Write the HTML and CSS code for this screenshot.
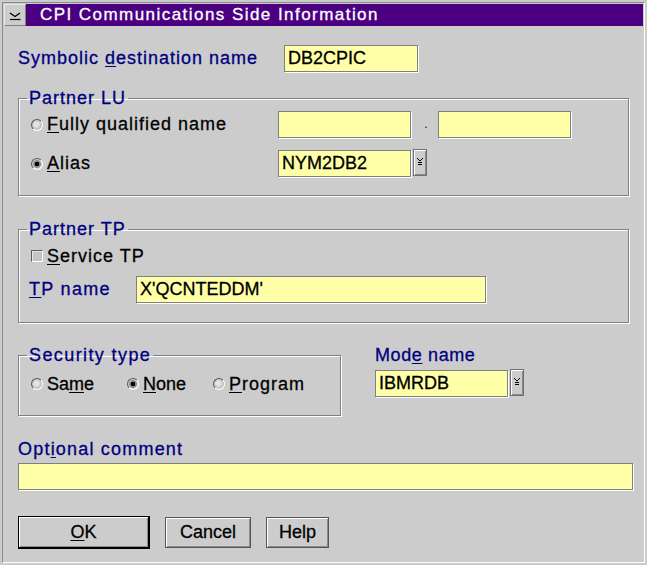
FILE: index.html
```html
<!DOCTYPE html>
<html>
<head>
<meta charset="utf-8">
<link rel="stylesheet" href="styles.css">
</head>
<body>
<div class="window">
  <div class="frame">
    <div class="titlebar">
      <div class="sysmenu">
        <svg width="20" height="20" viewBox="0 0 20 20"><polyline points="5,8 10,11.5 15,8" fill="none" stroke="#000" stroke-width="1.4"/><line x1="5" y1="14.5" x2="15.5" y2="14.5" stroke="#000" stroke-width="1.2"/></svg>
      </div>
      <div class="title">CPI Communications Side Information</div>
    </div>
    <div class="content">
      <div class="row dest">
        <span class="lbl lbl-dest">Symbolic <u>d</u>estination name</span>
        <div class="field w134">DB2CPIC</div>
      </div>

      <fieldset class="group lu">
        <legend>Partner LU</legend>
        <div class="row">
          <span class="opt optwide sp1"><span class="radio"></span><span><u>F</u>ully qualified name</span></span>
          <div class="field w133"></div>
          <span class="sep">.</span>
          <div class="field w133"></div>
        </div>
        <div class="row alias">
          <span class="opt optwide sp1"><span class="radio on"></span><span><u>A</u>lias</span></span>
          <div class="field w133">NYM2DB2</div>
          <div class="drop"><svg width="6" height="9" viewBox="0 0 6 9"><path d="M0 0h1v1H0zM5 0h1v1H5zM1 1h1v1H1zM4 1h1v1H4zM2 2h2v1H2zM1 4h4v1H1zM1 6h4v1H1z" fill="#000"/></svg></div>
        </div>
      </fieldset>

      <fieldset class="group tp">
        <legend>Partner TP</legend>
        <div class="row svc">
          <span class="opt sp1"><span class="check"></span><span><u>S</u>ervice TP</span></span>
        </div>
        <div class="row tpname">
          <span class="lbl lbl-tp"><u>T</u>P name</span>
          <div class="field w350">X'QCNTEDDM'</div>
        </div>
      </fieldset>

      <div class="secrow">
        <fieldset class="group sec">
          <legend>Security type</legend>
          <div class="row radios">
            <span class="opt o-same"><span class="radio"></span><span>Sa<u>m</u>e</span></span>
            <span class="opt o-none"><span class="radio on"></span><span><u>N</u>one</span></span>
            <span class="opt sp1"><span class="radio"></span><span><u>P</u>rogram</span></span>
          </div>
        </fieldset>
        <div class="mode">
          <span class="lbl lbl-mode">Mod<u>e</u> name</span>
          <div class="row modefield">
            <div class="field w133">IBMRDB</div>
            <div class="drop"><svg width="6" height="9" viewBox="0 0 6 9"><path d="M0 0h1v1H0zM5 0h1v1H5zM1 1h1v1H1zM4 1h1v1H4zM2 2h2v1H2zM1 4h4v1H1zM1 6h4v1H1z" fill="#000"/></svg></div>
          </div>
        </div>
      </div>

      <span class="lbl lbl-comment">Opt<u>i</u>onal comment</span>
      <div class="field wfull"></div>

      <div class="buttons">
        <div class="btn btn-ok"><span><u>O</u>K</span></div>
        <div class="btn btn-cancel">Cancel</div>
        <div class="btn btn-help">Help</div>
      </div>
    </div>
  </div>
</div>
</body>
</html>
```

FILE: styles.css
```css
html, body {
  margin: 0;
  padding: 0;
  background: #cccccc;
}

body {
  font-family: "Liberation Sans", Arial, sans-serif;
  font-size: 18px;
  color: #000;
  -webkit-text-stroke: 0.3px currentColor;
}

.window {
  width: 647px;
  height: 565px;
  box-sizing: border-box;
  padding: 2px;
  background: #cccccc;
}

.frame {
  height: 100%;
  box-sizing: border-box;
  border: 1px solid;
  border-color: #8a8a8a #ffffff #ffffff #8a8a8a;
  padding: 1px;
}

.titlebar {
  display: flex;
  height: 22px;
  background: #4b0082;
}

.sysmenu {
  width: 22px;
  height: 22px;
  box-sizing: border-box;
  background: #cccccc;
  border: 1px solid;
  border-color: #e8e8e8 #808080 #808080 #e8e8e8;
  display: flex;
  align-items: center;
  justify-content: center;
}

.title {
  color: #ffffff;
  font-size: 17px;
  letter-spacing: 1.45px;
  line-height: 22px;
  padding-left: 14px;
  white-space: nowrap;
}

.content {
  padding: 0 10px 0 14px;
}

u {
  text-decoration-thickness: 1px;
  text-underline-offset: 2px;
}

.row {
  display: flex;
  align-items: center;
}

.lbl {
  color: #000080;
  display: block;
  line-height: 21px;
  white-space: nowrap;
  letter-spacing: 1.1px;
}

.sp1 {
  letter-spacing: 1px;
}

.dest {
  margin-top: 19px;
}

.lbl-dest {
  width: 266px;
  letter-spacing: 1px;
}

.field {
  height: 27px;
  box-sizing: border-box;
  border: 1px solid #808080;
  box-shadow: 1px 1px 0 #ffffff;
  background: #ffffa8;
  padding: 0 3px;
  line-height: 25px;
  white-space: nowrap;
  color: #000;
}

.w134 { width: 134px; }
.w133 { width: 133px; }
.w350 { width: 350px; }
.wfull { width: 615px; }

.group {
  margin: 0;
  border: 1px solid #808080;
  box-shadow: 1px 1px 0 #ffffff, inset 1px 1px 0 #ffffff;
  padding: 0 12px;
  min-width: 0;
}

.group legend {
  color: #000080;
  line-height: 21px;
  padding: 0 2px;
  margin-left: -4px;
  letter-spacing: 1px;
}

.sec legend {
  letter-spacing: 1.4px;
}

.lu {
  margin-top: 16px;
  width: 611px;
  box-sizing: border-box;
  padding-top: 2px;
  padding-bottom: 18px;
}

.alias {
  margin-top: 12px;
}

.opt {
  display: flex;
  align-items: center;
  white-space: nowrap;
  height: 20px;
}

.optwide {
  width: 247px;
}

.radio {
  width: 12px;
  height: 12px;
  box-sizing: border-box;
  border-radius: 50%;
  border: 1px solid;
  border-color: #5a5a5a #ffffff #ffffff #5a5a5a;
  background: radial-gradient(circle at 45% 45%, #e4e4e4 0 2px, #bdbdbd 5px);
  margin-right: 4px;
  flex: none;
}

.radio.on {
  background: radial-gradient(circle, #000 0 2px, #8e8e8e 2.6px 3.6px, #cfcfcf 4.2px);
}

.check {
  width: 12px;
  height: 12px;
  box-sizing: border-box;
  border: 1px solid;
  border-color: #5a5a5a #ffffff #ffffff #5a5a5a;
  background: #c4c4c4;
  box-shadow: inset 1px 1px 0 #e6e6e6;
  margin-right: 4px;
  flex: none;
}

.sep {
  width: 27px;
  height: 27px;
  text-align: center;
  color: #000080;
  font-size: 12px;
  line-height: 27px;
  -webkit-text-stroke: 0;
  padding-left: 3px;
  box-sizing: border-box;
}

.drop {
  width: 14px;
  height: 27px;
  box-sizing: border-box;
  margin-left: 2px;
  margin-top: -2px;
  border: 1px solid #707070;
  box-shadow: inset 1px 1px 0 #ffffff, inset -1px -1px 0 #8a8a8a;
  background: #cccccc;
  display: flex;
  align-items: center;
  justify-content: center;
}

.tp {
  margin-top: 23px;
  width: 611px;
  box-sizing: border-box;
  padding-top: 6px;
  padding-bottom: 19px;
}

.tpname {
  margin-top: 10px;
}

.lbl-tp {
  width: 107px;
  margin-left: -2px;
  letter-spacing: 1.3px;
}

.secrow {
  display: flex;
  align-items: flex-start;
  margin-top: 22px;
}

.sec {
  width: 323px;
  box-sizing: border-box;
  padding-top: 8px;
  padding-bottom: 21px;
}

.o-same { width: 96px; }
.o-none { width: 86px; }

.mode {
  margin-left: 34px;
}

.lbl-mode {
  letter-spacing: 0.6px;
}

.modefield {
  margin-top: 4px;
}

.modefield .drop {
  margin-left: 2px;
}

.lbl-comment {
  margin-top: 23px;
  letter-spacing: 1.2px;
}

.wfull {
  margin-top: 3px;
}

.buttons {
  display: flex;
  align-items: center;
  margin-top: 26px;
}

.btn {
  height: 31px;
  box-sizing: border-box;
  border: 1px solid #555555;
  box-shadow: inset 1px 1px 0 #ffffff, inset -1px -1px 0 #8a8a8a;
  background: #cccccc;
  display: flex;
  align-items: center;
  justify-content: center;
  color: #000;
}

.btn-ok {
  width: 132px;
  height: 33px;
  border-color: #000;
  border-width: 1px 2px 2px 1px;
}

.btn-cancel {
  width: 86px;
  margin-left: 15px;
}

.btn-help {
  width: 63px;
  margin-left: 15px;
}
```
